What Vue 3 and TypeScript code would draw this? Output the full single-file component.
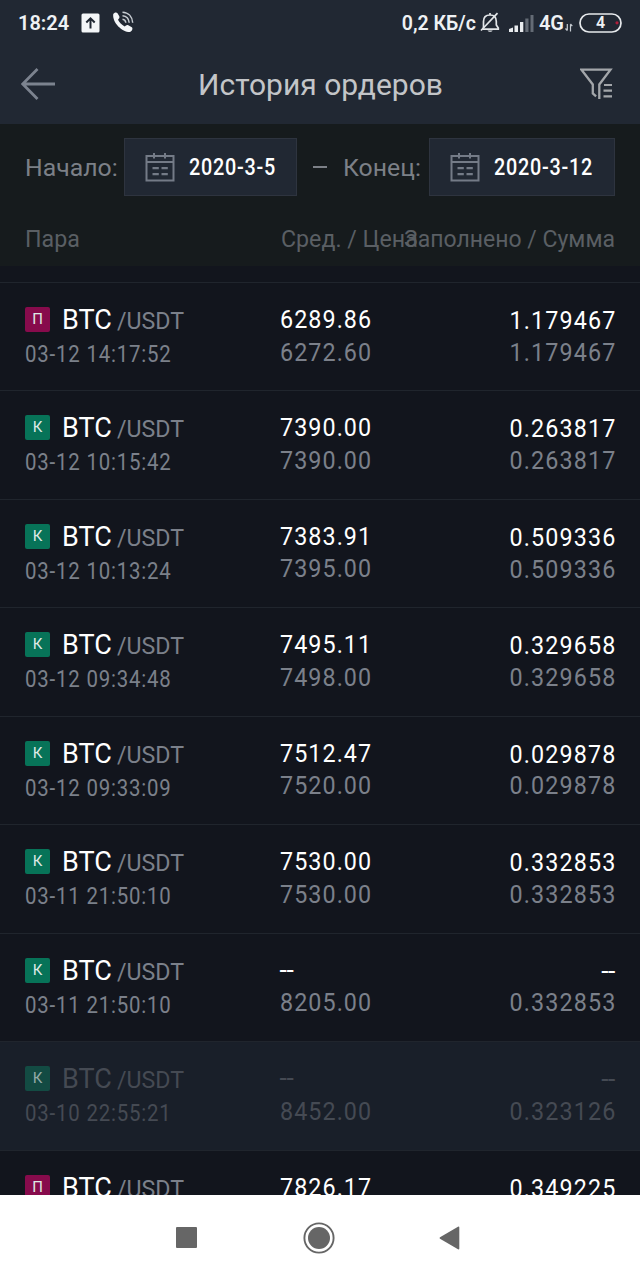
<script setup lang="ts">
interface Order {
  side: 'buy' | 'sell'
  time: string
  avg: string
  price: string
  filled: string
  amount: string
  cancelled?: boolean
}

const orders: Order[] = [
  { side: 'sell', time: '03-12 14:17:52', avg: '6289.86', price: '6272.60', filled: '1.179467', amount: '1.179467' },
  { side: 'buy', time: '03-12 10:15:42', avg: '7390.00', price: '7390.00', filled: '0.263817', amount: '0.263817' },
  { side: 'buy', time: '03-12 10:13:24', avg: '7383.91', price: '7395.00', filled: '0.509336', amount: '0.509336' },
  { side: 'buy', time: '03-12 09:34:48', avg: '7495.11', price: '7498.00', filled: '0.329658', amount: '0.329658' },
  { side: 'buy', time: '03-12 09:33:09', avg: '7512.47', price: '7520.00', filled: '0.029878', amount: '0.029878' },
  { side: 'buy', time: '03-11 21:50:10', avg: '7530.00', price: '7530.00', filled: '0.332853', amount: '0.332853' },
  { side: 'buy', time: '03-11 21:50:10', avg: '--', price: '8205.00', filled: '--', amount: '0.332853' },
  { side: 'buy', time: '03-10 22:55:21', avg: '--', price: '8452.00', filled: '--', amount: '0.323126', cancelled: true },
  { side: 'sell', time: '', avg: '7826.17', price: '', filled: '0.349225', amount: '' },
]

const dates = [
  { label: 'Начало:', value: '2020-3-5', cls: 'from' },
  { label: 'Конец:', value: '2020-3-12', cls: 'to' },
]
</script>

<template>
  <div class="screen">
    <div class="status">
      <span class="clock">18:24</span>
      <svg class="upload" width="19" height="20" viewBox="0 0 19 20">
        <rect x="0.5" y="0.5" width="18" height="19" rx="1.5" fill="#f4f6f8" />
        <path d="M9.5 15.5V5M5.3 9.500l4.2-4.2 4.2 4.2" fill="none" stroke="#212833" stroke-width="2" />
      </svg>
      <svg class="call" width="23" height="23" viewBox="0 0 23 23">
        <path d="M1.200 3.200C2 1.500 4.500.8 5.500 2.200l1.800 3c.7 1.500-.6 2.400-1.300 3.500 1.500 3 3.500 5 6.700 6.700 1.200-.9 2.300-2 3.600-1.100l3.500 2c1.500 1.300.2 3.800-1.700 4.700C10.500 21.300.300 12 1.200 3.200z" fill="#f4f6f8" />
        <path d="M10.500 8.200c2 .2 3.100 1.500 3.300 3.500M10.500 4.800c4 .3 6.300 2.800 6.700 6.900M10.500 1.300c6 .2 9.700 4.500 10.200 10.400" fill="none" stroke="#c7ccd2" stroke-width="1.500" />
      </svg>
      <span class="speed">0,2 КБ/с</span>
      <svg class="bell" width="20" height="22" viewBox="0 0 20 22">
        <path d="M3.500 16V9.500C3.500 5.500 6 3 10 3s6.300 2.500 6.300 6.500V13l2 3v1.200H2.500M10 3V1" fill="none" stroke="#e3e6e9" stroke-width="1.700" />
        <path d="M1 18.500 17.500 1.200" stroke="#e3e6e9" stroke-width="1.700" />
        <path d="M7.500 18.500h5.200c-.8 1.700-4.400 1.700-5.200 0z" fill="#e3e6e9" />
      </svg>
      <svg class="signal" width="25" height="19" viewBox="0 0 25 19">
        <path d="M0 18v-3l4-1.500V18zM5.500 18v-6.500H9V18zM11 18V8h3.300v10z" fill="#e9ecef" />
        <path d="M16.300 18V4.500h3.200V18zM21.500 18V1h3v17z" fill="#646b75" />
      </svg>
      <span class="net">4G</span>
      <svg class="updown" width="8" height="9" viewBox="0 0 8 9">
        <path d="M2.300 1v6.500M.5 5.500l1.800 2.200M5.500 8.500V1.200M7.300 3.200 5.500 1" fill="none" stroke="#c5cad0" stroke-width="1.200" />
      </svg>
      <svg class="battery" width="43" height="20" viewBox="0 0 43 20">
        <rect x="1" y="1" width="41" height="18" rx="9" fill="none" stroke="#e6e9ec" stroke-width="1.700" />
        <circle cx="38" cy="9.800" r="1.600" fill="#b01d3a" />
        <text x="21.500" y="15.300" text-anchor="middle" class="level">4</text>
      </svg>
    </div>

    <header class="bar">
      <svg class="back" width="35" height="32" viewBox="0 0 35 32">
        <path d="M16.500 1 1.700 16l14.800 15M1.700 16H34" fill="none" stroke="#7c838f" stroke-width="2.800" />
      </svg>
      <h1>История ордеров</h1>
      <svg class="filter" width="33" height="32" viewBox="0 0 33 32">
        <path d="M19.300 31V16.500L30.500 1.700H1.500L12.800 16.500v9l3.300 2.800" fill="none" stroke="#a3a6aa" stroke-width="2.300" />
        <path d="M24 17h8M23.500 22.600h8.500M23.500 28.300h8.500" stroke="#a3a6aa" stroke-width="2.200" />
      </svg>
    </header>

    <section class="controls">
      <div class="range">
        <template v-for="(d, i) in dates" :key="d.cls">
          <span v-if="i > 0" class="dash"></span>
          <span class="label" :class="d.cls">{{ d.label }}</span>
          <div class="date" :class="d.cls">
            <svg width="30" height="30" viewBox="0 0 30 30">
              <path d="M1.500 4h27v24.500h-27zM1.500 10h27M9 1v5.500M20 1v5.500" fill="none" stroke="#747b87" stroke-width="2" />
              <path d="M7.500 16.200h6.300M16.500 16.200h6.300M7.500 22.200h6.300M16.500 22.200h6.300" stroke="#747b87" stroke-width="2.200" />
            </svg>
            <span class="value">{{ d.value }}</span>
          </div>
        </template>
      </div>
      <div class="heads">
        <span class="h-pair">Пара</span>
        <span class="h-price">Сред. / Цена</span>
        <span class="h-sum">Заполнено / Сумма</span>
      </div>
    </section>

    <main class="list">
      <article v-for="(o, i) in orders" :key="i" class="order" :class="{ cancelled: o.cancelled }">
        <div class="pair">
          <div class="name">
            <i class="badge" :class="o.side">{{ o.side === 'buy' ? 'К' : 'П' }}</i>
            <span class="base">BTC</span>
            <span class="quote">/USDT</span>
          </div>
          <div v-if="o.time" class="time">{{ o.time }}</div>
        </div>
        <div class="price">
          <div class="num main" :class="{ none: o.avg === '--' }">{{ o.avg }}</div>
          <div v-if="o.price" class="num">{{ o.price }}</div>
        </div>
        <div class="sum">
          <div class="num main" :class="{ none: o.filled === '--' }">{{ o.filled }}</div>
          <div v-if="o.amount" class="num">{{ o.amount }}</div>
        </div>
      </article>
    </main>

    <nav class="keys">
      <svg width="21" height="21" viewBox="0 0 21 21"><rect width="21" height="21" rx="1" fill="#666" /></svg>
      <svg class="home" width="32" height="32" viewBox="0 0 32 32">
        <circle cx="16" cy="16" r="14.600" fill="none" stroke="#666" stroke-width="1.900" />
        <circle cx="16" cy="16" r="11" fill="#666" />
      </svg>
      <svg width="21" height="24" viewBox="0 0 21 24"><path d="M1 11.200 19 .7q1.300-.5 1.300.8v21q0 1.300-1.300.8L1 12.800q-1-.8 0-1.600z" fill="#666" /></svg>
    </nav>
  </div>
</template>

<style>
body {
  margin: 0;
  background: #12151d;
}
</style>

<style scoped>
.screen {
  width: 640px;
  height: 1280px;
  overflow: hidden;
  display: flex;
  flex-direction: column;
  background: #12151d;
  font-family: Roboto, "Noto Sans", sans-serif;
}
.screen svg {
  display: block;
  flex: none;
}
.screen span,
.screen div {
  white-space: nowrap;
}
.status {
  flex: none;
  box-sizing: border-box;
  height: 45px;
  padding: 0 18px 0 18px;
  display: flex;
  align-items: center;
  background: #212833;
  color: #eef1f4;
  font-size: 20px;
  font-weight: 600;
  line-height: 45px;
}
.clock {
  width: 63px;
  padding-top: 2px;
}
.upload {
  margin-right: 12px;
}
.speed {
  margin-left: auto;
  padding-top: 2px;
  font-size: 19.500px;
}
.bell {
  margin-left: 4px;
}
.signal {
  margin: 2px 5px 0 9px;
}
.net {
  padding-top: 2px;
}
.updown {
  margin: 9px 6px 0 1px;
}
.level {
  font-size: 16px;
  font-weight: 600;
  fill: #eef1f4;
}
.bar {
  flex: none;
  box-sizing: border-box;
  height: 79px;
  padding: 0 27px 0 21px;
  display: flex;
  align-items: center;
  background: #212833;
}
h1 {
  flex: 1;
  margin: 0 0 0 5px;
  color: #c3c5c8;
  font-size: 30px;
  font-weight: 400;
  line-height: 40px;
  text-align: center;
}
.back {
  margin-bottom: 1px;
}
.filter {
  margin-bottom: 1px;
}
.controls {
  flex: none;
  box-sizing: border-box;
  height: 142px;
  padding: 14px 25px 0;
  background: #161b1d;
}
.range {
  display: flex;
  align-items: center;
  height: 58px;
}
.label {
  flex: none;
  width: 99px;
  padding-top: 1px;
  color: #7c8087;
  font-size: 24.800px;
}
.label.to {
  width: 86px;
}
.date {
  flex: none;
  box-sizing: border-box;
  width: 173px;
  height: 58px;
  padding-left: 20px;
  display: flex;
  align-items: center;
  gap: 14px;
  border: 1px solid #2e343f;
  background: #212833;
  color: #fff;
  font-size: 23px;
  font-weight: 500;
}
.date.to {
  width: 186px;
}
.value {
  padding-top: 1px;
  transform: scaleX(0.86);
  transform-origin: left center;
  letter-spacing: 0.9px;
}
.dash {
  flex: none;
  width: 14px;
  height: 2px;
  margin: 0 16px 0 16px;
  background: #7c8087;
}
.heads {
  display: grid;
  grid-template-columns: 256px 100px 1fr;
  margin-top: 25px;
  color: #5a5f64;
  font-size: 23.200px;
  line-height: 36px;
}
.h-sum {
  justify-self: end;
  padding-top: 1px;
  font-size: 23px;
}
.list {
  flex: none;
  box-sizing: border-box;
  height: 929px;
  padding-top: 16px;
  overflow: hidden;
}
.order {
  box-sizing: border-box;
  height: 108.450px;
  padding: 0 25px;
  display: grid;
  grid-template-columns: 254.500px 120px 1fr;
  border-top: 1px solid #20252d;
  color: #7b808a;
}
.pair {
  padding-top: 20px;
}
.name {
  display: flex;
  align-items: baseline;
  height: 32px;
  line-height: 32px;
}
.badge {
  align-self: flex-start;
  width: 25px;
  height: 25px;
  margin: 4px 12px 0 0;
  border-radius: 2px;
  color: #dfe9e6;
  font-size: 15px;
  font-style: normal;
  line-height: 24px;
  text-align: center;
}
.badge.buy {
  background: #077358;
}
.badge.sell {
  background: #870b4c;
}
.base {
  width: 55px;
  color: #fff;
  font-size: 27px;
  transform: translateY(1px);
}
.quote {
  font-size: 23.200px;
  transform: translateY(1px);
}
.time {
  margin-top: 5px;
  font-size: 23px;
  line-height: 30px;
  letter-spacing: 0.9px;
  transform: scaleX(0.888);
  transform-origin: left center;
}
.price {
  padding-top: 20px;
}
.sum {
  padding-top: 21px;
  text-align: right;
}
.num {
  font-size: 26.500px;
  line-height: 32.600px;
  letter-spacing: 1.200px;
  transform: scaleX(0.88);
  transform-origin: left center;
}
.sum .num {
  line-height: 31.700px;
  letter-spacing: 1.300px;
  margin-right: -1px;
  transform-origin: right center;
}
.num.none,
.sum .num.none {
  letter-spacing: -0.4px;
  margin-right: 0;
  transform: none;
}
.main {
  color: #fff;
}
.cancelled {
  background: #191f29;
  color: #454a53;
}
.cancelled .base,
.cancelled .main {
  color: #454a53;
}
.cancelled .badge.buy {
  background: #134b43;
  color: #93aaa8;
}
.keys {
  flex: none;
  height: 85px;
  padding: 0 180px 0 176px;
  display: flex;
  align-items: center;
  justify-content: space-between;
  background: #fff;
}
.home {
  margin-left: 2px;
}
</style>
